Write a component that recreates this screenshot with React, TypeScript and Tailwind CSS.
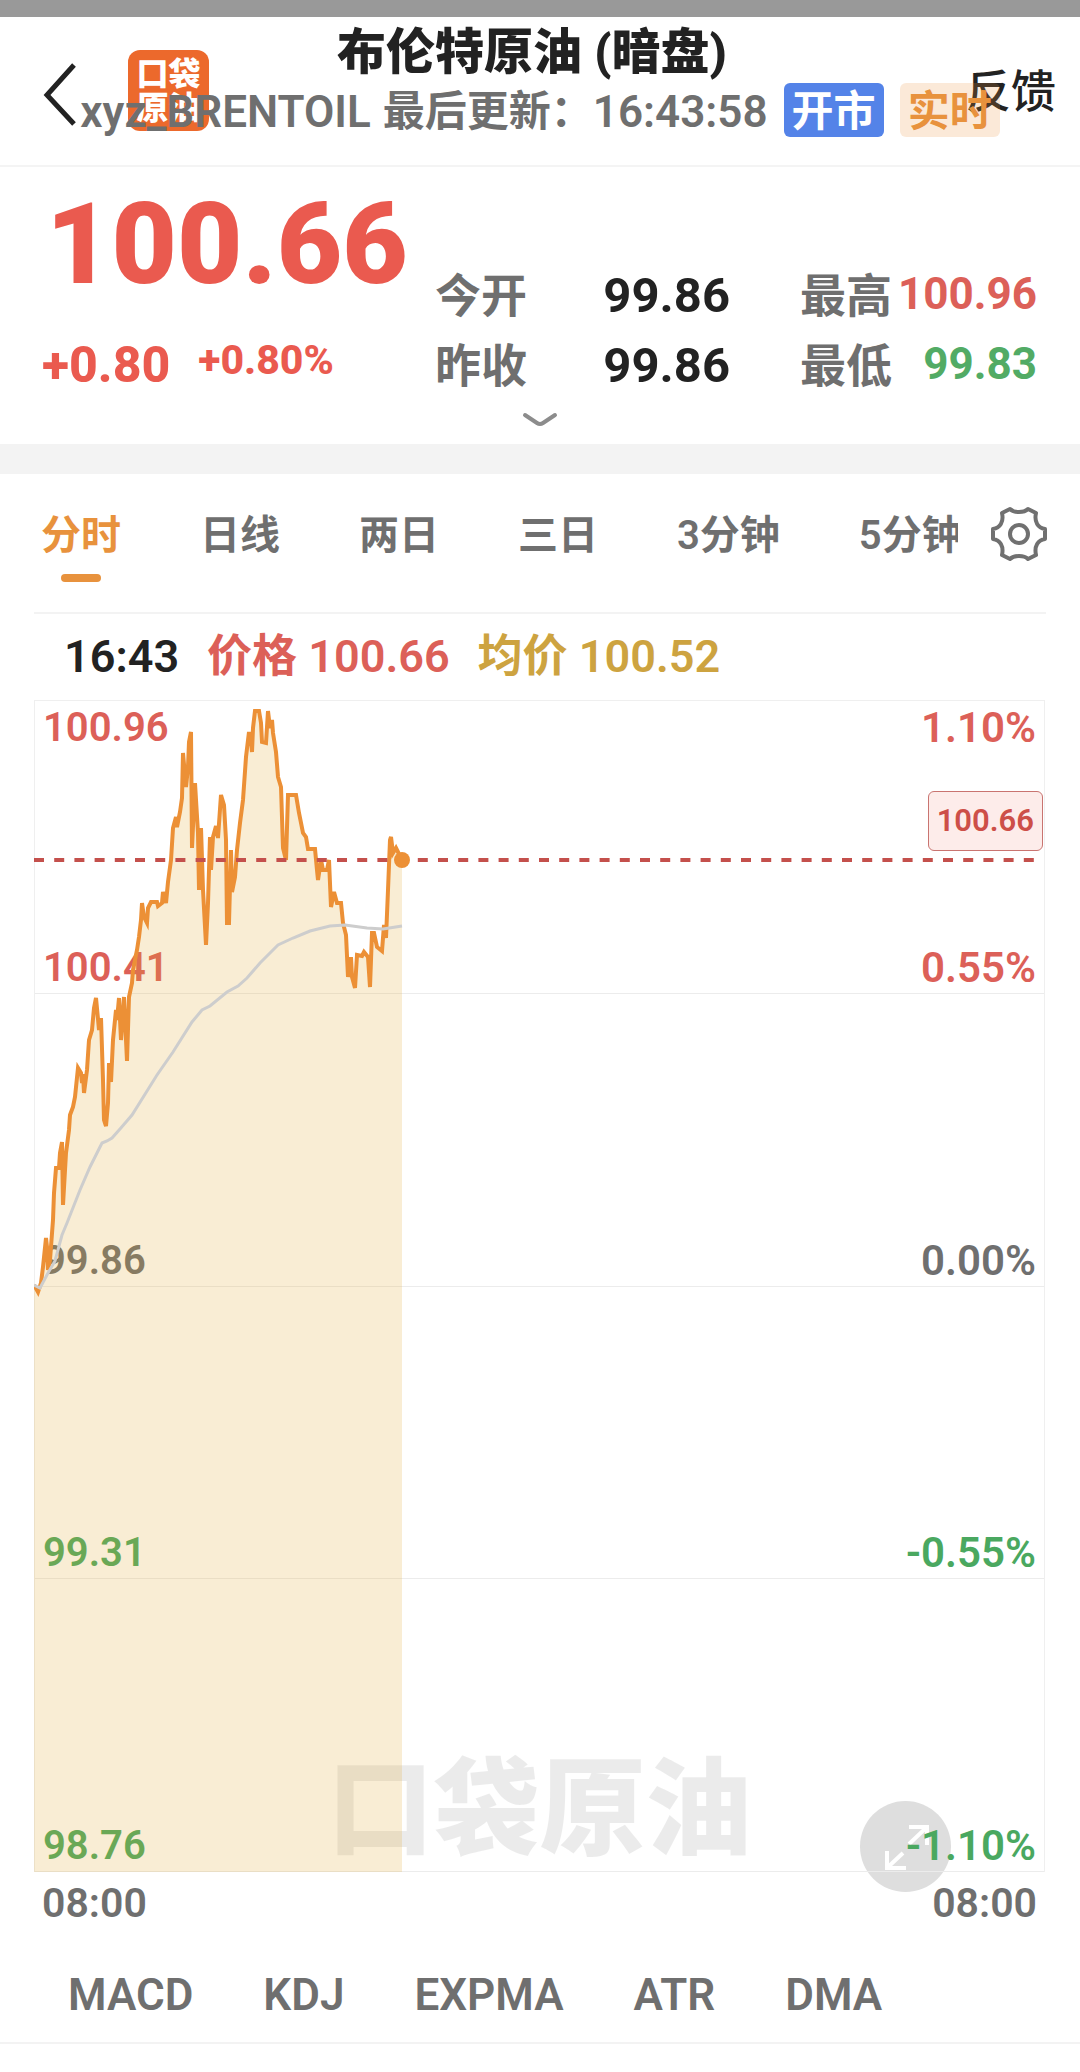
const PRICE_POINTS =
  "0,585 4,592 7,583 9,567 12,538 13,547 14,570 16,560 19,520 20,493 22,468 25,468 26,453 28,442 29,505 32,453 35,430 36,415 39,407 41,397 44,368 47,373 48,383 49,374 50,393 53,370 55,340 58,330 60,308 62,298 64,319 65,330 67,318 69,380 70,420 72,426 74,403 75,363 77,382 79,340 82,310 83,320 85,298 87,340 90,297 93,361 95,297 98,283 99,270 103,250 105,237 107,220 108,203 110,217 113,223 114,208 117,202 123,202 124,206 128,203 129,192 132,203 134,182 137,160 139,128 142,117 143,127 146,112 148,98 149,53 152,87 154,67 155,42 157,32 158,148 161,83 164,133 165,190 167,128 169,190 172,245 174,203 176,137 177,170 179,137 182,126 184,138 187,95 190,105 192,140 193,223 195,223 197,150 198,192 201,177 203,150 206,123 209,100 212,57 215,32 217,40 218,52 219,28 221,11 225,11 227,23 228,42 232,43 234,11 236,28 238,20 239,33 242,52 244,77 247,87 249,148 252,160 254,95 262,95 265,113 269,133 272,137 274,149 281,149 283,170 284,180 287,160 289,170 293,170 295,160 297,207 300,192 303,203 307,203 309,223 312,235 314,277 317,257 318,277 321,288 323,255 328,256 330,252 334,257 336,287 338,233 340,233 343,247 348,251 350,225 352,238 354,190 356,140 357,137 359,153 362,148 368,160";

const AVERAGE_POINTS =
  "0,585 6,588 14,573 21,561 28,535 33,523 46,490 56,467 68,443 73,441 78,438 86,429 98,415 123,375 139,352 158,322 168,310 176,306 193,292 204,286 213,278 226,263 244,245 259,238 276,231 296,226 311,225 333,228 349,229 368,226";

const TABS = ["分时", "日线", "两日", "三日", "3分钟", "5分钟"];

const INDICATORS = ["MACD", "KDJ", "EXPMA", "ATR", "DMA"];

const LEVELS = [
  { price: "100.41", change: "0.55%", tone: "text-[#dc6058]" },
  { price: "99.86", change: "0.00%", tone: "text-[#6f6f6f]" },
  { price: "99.31", change: "-0.55%", tone: "text-[#4aa860]" },
  { price: "98.76", change: "-1.10%", tone: "text-[#4aa860]" },
];

function Header() {
  return (
    <header className="grid h-[150px] border-b-2 border-[#f4f4f4]">
      <div className="col-start-1 row-start-1 flex items-start pr-[24px] pl-[40px]">
        <button type="button" aria-label="返回" className="mt-[42px]">
          <svg className="h-[70px] w-[40px]" viewBox="0 0 40 70" fill="none" stroke="#222" strokeWidth="5">
            <path d="M34 6 L7 36 L34 65" />
          </svg>
        </button>
        <div className="mt-[33px] ml-[48px] flex h-[81px] w-[81px] flex-col items-center justify-center rounded-xl bg-[#ec692c] text-[32px] leading-[34px] font-black text-white">
          <span>口袋</span>
          <span>原油</span>
        </div>
        <button type="button" className="mt-[48px] ml-auto text-[45px] leading-[56px] font-medium text-[#222]">
          反馈
        </button>
      </div>
      <div className="relative col-start-1 row-start-1 flex flex-col items-center">
        <h1 className="mt-1 pr-4 text-[49px] leading-[64px] font-black text-[#222]">布伦特原油 (暗盘)</h1>
        <div className="-mt-1 flex items-center text-[42px] leading-[54px] font-semibold whitespace-nowrap text-[#6f6f6f]">
          <span className="pt-1 text-[44px]">xyz_BRENTOIL</span>
          <span className="ml-3 pt-1">最后更新：</span>
          <span className="pt-1 text-[44px]">16:43:58</span>
          <span className="ml-4 rounded-md bg-[#5483e8] px-2 pt-1 leading-[50px] text-white">开市</span>
          <span className="ml-4 rounded-md bg-[#ec923a]/20 px-2 pt-1 leading-[50px] text-[#e8923d]">实时</span>
        </div>
      </div>
    </header>
  );
}

function Quote() {
  return (
    <section className="border-b-[30px] border-[#f3f3f3]">
      <div className="grid grid-cols-[393fr_365fr_237fr] pr-[43px] pl-[42px]">
        <div className="pt-5 text-[#ea5a4f]">
          <div className="pl-1 text-[113px] leading-[116px] font-black">100.66</div>
          <div className="mt-9 flex gap-[28px] font-extrabold">
            <span className="text-[50px] leading-[52px]">+0.80</span>
            <span className="text-[41px] leading-[42px]">+0.80%</span>
          </div>
        </div>
        <dl className="mt-[94px] grid grid-cols-2 pr-[70px] text-[46px] leading-[70px] font-semibold">
          <dt className="text-[#6f6f6f]">今开</dt>
          <dd className="text-right text-[49px] font-bold text-[#222]">99.86</dd>
          <dt className="text-[#6f6f6f]">昨收</dt>
          <dd className="text-right text-[49px] font-bold text-[#222]">99.86</dd>
        </dl>
        <dl className="mt-[94px] grid grid-cols-[auto_1fr] text-[46px] leading-[70px] font-semibold">
          <dt className="text-[#6f6f6f]">最高</dt>
          <dd className="text-right text-[44px] leading-[66px] font-bold text-[#dc6058]">100.96</dd>
          <dt className="text-[#6f6f6f]">最低</dt>
          <dd className="text-right text-[44px] leading-[66px] font-bold text-[#52ab65]">99.83</dd>
        </dl>
      </div>
      <button type="button" aria-label="展开" className="mx-auto flex h-[43px] w-[60px] justify-center">
        <svg className="mt-2 h-[20px] w-[36px]" viewBox="0 0 36 20" fill="none" stroke="#8c8c8c" strokeWidth="4" strokeLinecap="round">
          <path d="M3 6 L15 14 Q18 16 21 14 L33 6" />
        </svg>
      </button>
    </section>
  );
}

function Tabs() {
  return (
    <div className="mx-[34px] flex h-[140px] items-start border-b-2 border-[#f3f3f3]">
      <nav className="ml-[7px] flex min-w-0 flex-1 gap-[79px] overflow-hidden pt-8 text-[40px] leading-[60px] font-semibold whitespace-nowrap">
        {TABS.map((tab, i) => (
          <button
            key={tab}
            type="button"
            className={i === 0 ? "flex shrink-0 flex-col items-center text-[#e8923d]" : "shrink-0 self-start text-[#6f6f6f]"}
          >
            {tab}
            {i === 0 && <span className="mt-2 h-2 w-10 rounded-full bg-[#e8923d]" />}
          </button>
        ))}
      </nav>
      <button type="button" aria-label="设置" className="-mr-0.5 mt-[32px] ml-8">
        <svg className="h-[56px] w-[58px]" viewBox="0 0 58 56" fill="none" stroke="#707070" strokeWidth="4" strokeLinejoin="round">
          <path d="M20 3 C24 7 34 7 38 3 L46 7 C44 16 48 22 55 23 V33 C48 34 44 40 46 49 L38 53 C34 49 24 49 20 53 L12 49 C14 40 10 34 3 33 V23 C10 22 14 16 12 7 Z" />
          <circle cx="29" cy="28" r="9" />
        </svg>
      </button>
    </div>
  );
}

function Chart() {
  return (
    <section className="mr-[35px] ml-[34px]">
      <div className="flex h-[86px] items-center pl-[30px] text-[45px] leading-[60px] font-semibold">
        <span className="text-[#222]">16:43</span>
        <span className="ml-7 text-[#dc6058]">价格 100.66</span>
        <span className="ml-7 text-[#cda340]">均价 100.52</span>
      </div>
      <div className="relative">
        <div className="absolute inset-x-0 bottom-0 text-center text-[106px] leading-[124px] font-black text-black/8">
          口袋原油
        </div>
        <button
          type="button"
          aria-label="全屏"
          className="absolute right-[94px] bottom-[-20px] size-[91px] rounded-full bg-[#dedede]"
        >
          <svg viewBox="0 0 91 91" fill="none" stroke="#fff" strokeWidth="4">
            <path d="M49 26 H67 V44 M66 27 L49 43 M27 50 V67 H46 M28 66 L43 52" />
          </svg>
        </button>
        <div className="relative grid h-[1172px] grid-rows-4 border-x border-t border-[#efefef] leading-[50px] font-semibold">
          {LEVELS.map((level, i) => (
            <div key={level.price} className="flex flex-col justify-between border-b border-[#ececec] px-2">
              <div className="flex justify-between pt-0.5 text-[#dc6058]">
                {i === 0 && (
                  <>
                    <span className="text-[40px]">100.96</span>
                    <span className="text-[42px]">1.10%</span>
                  </>
                )}
              </div>
              <div className={`flex justify-between ${level.tone}`}>
                <span className="text-[40px]">{level.price}</span>
                <span className="text-[42px]">{level.change}</span>
              </div>
            </div>
          ))}
        </div>
        <svg className="absolute inset-0 h-full w-full" viewBox="0 0 1011 1172" preserveAspectRatio="none" fill="none">
          <polygon points={`${PRICE_POINTS} 368,1172 0,1172`} fill="#e2a933" fillOpacity="0.21" />
          <polyline points={PRICE_POINTS} stroke="#ec9036" strokeWidth="4" />
          <polyline points={AVERAGE_POINTS} stroke="#cdcdcd" strokeWidth="3" />
          <path d="M0 160 H1002" stroke="#c4504c" strokeWidth="4" strokeDasharray="10 10.200" />
          <circle cx="368" cy="160" r="8" fill="#ec9036" />
        </svg>
        <div className="absolute top-[91px] right-[2px] rounded-md border border-[#c97470] bg-[#fdecea] px-2 text-[31px] leading-[58px] font-semibold text-[#cd4f48]">
          100.66
        </div>
      </div>
      <div className="flex justify-between px-2 pt-1 text-[41px] leading-[54px] font-semibold text-[#6f6f6f]">
        <span>08:00</span>
        <span>08:00</span>
      </div>
    </section>
  );
}

export default function App() {
  return (
    <main className="min-h-screen overflow-hidden border-t-[17px] border-[#999] bg-white font-['Roboto','Noto_Sans_CJK_SC',sans-serif]">
      <Header />
      <Quote />
      <Tabs />
      <Chart />
      <nav className="flex gap-[70px] border-b-2 border-[#f3f3f3] px-[68px] pt-9 pb-[18px] text-[44px] leading-[58px] font-semibold text-[#6f6f6f]">
        {INDICATORS.map((name) => (
          <button key={name} type="button">
            {name}
          </button>
        ))}
      </nav>
    </main>
  );
}
